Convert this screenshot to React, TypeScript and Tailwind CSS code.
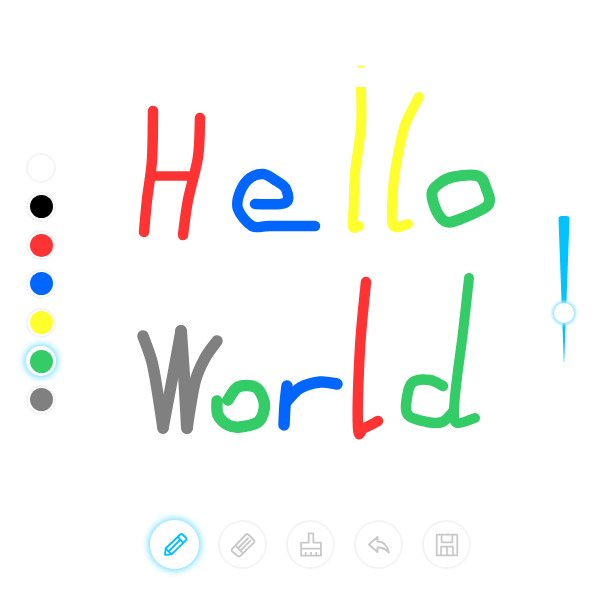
import React from 'react';

type Pt = [number, number];
type Stroke = { color: string; w: number; pts: Pt[]; closed?: boolean; butt?: boolean };

const RED = '#ff3333';
const BLUE = '#0066ff';
const YELLOW = '#ffff2e';
const GREEN = '#33cc66';
const GRAY = '#808080';

const strokes: Stroke[] = [
  // Hello
  { color: RED, w: 10.5, pts: [[153, 111], [152, 160], [147, 200], [144, 232]] },
  { color: RED, w: 10.5, pts: [[200, 118], [198, 157], [188, 200], [183, 235]] },
  { color: RED, w: 9.5, pts: [[152, 176], [188, 176]] },
  { color: BLUE, w: 10.5, pts: [[255, 204], [285, 203], [286, 189], [275, 180], [263, 174], [250, 178], [240, 192], [238, 209], [252, 226], [270, 226], [315, 226]] },
  { color: YELLOW, w: 10, butt: true, pts: [[361, 87], [361, 127], [355, 173], [353.5, 215]] },
  { color: YELLOW, w: 10, pts: [[353.5, 212], [353, 227], [359, 226]] },
  { color: YELLOW, w: 10, pts: [[419, 97], [405, 125], [397, 160], [393, 190], [393, 225], [408, 224]] },
  { color: GREEN, w: 11, closed: true, pts: [[432, 193], [440, 183], [453, 177], [478, 176], [486, 188], [488, 205], [463, 218], [447, 222], [437, 212]] },
  // World
  { color: GRAY, w: 11.5, pts: [[143, 336], [152, 362], [158, 395], [163, 428]] },
  { color: GRAY, w: 11.5, pts: [[163, 428], [173, 375], [181, 331]] },
  { color: GRAY, w: 12, pts: [[181, 331], [184, 375], [187, 428]] },
  { color: GRAY, w: 11.5, pts: [[187, 428], [195, 382], [205, 358], [217, 341]] },
  { color: GREEN, w: 11.5, pts: [[217, 401], [218, 415], [228, 425], [240, 427], [258, 422], [264, 410], [263, 398], [255, 387], [238, 387], [228, 400]] },
  { color: BLUE, w: 11.5, pts: [[287, 386], [285, 405], [284, 425]] },
  { color: BLUE, w: 11.5, pts: [[286, 402], [300, 388], [320, 382], [337, 384]] },
  { color: RED, w: 10.5, pts: [[366, 282], [360, 348], [358, 428], [364, 428], [378, 421]] },
  { color: GREEN, w: 10, pts: [[469, 278], [463, 332], [457, 378], [454, 410], [457, 423], [475, 418]] },
  { color: GREEN, w: 10.5, pts: [[443, 386], [430, 380], [413, 382], [407, 397], [408, 415], [427, 422], [442, 422], [453, 412]] },
];

// catmull-rom through the points, the drawing has no hard corners
function toPath(pts: Pt[], closed?: boolean) {
  const n = pts.length;
  const at = (i: number) => (closed ? pts[(i + n) % n] : pts[Math.max(0, Math.min(n - 1, i))]);
  let d = `M${pts[0][0]} ${pts[0][1]}`;
  const segs = closed ? n : n - 1;
  for (let i = 0; i < segs; i++) {
    const [p0, p1, p2, p3] = [at(i - 1), at(i), at(i + 1), at(i + 2)];
    const c1 = [p1[0] + (p2[0] - p0[0]) / 6, p1[1] + (p2[1] - p0[1]) / 6];
    const c2 = [p2[0] - (p3[0] - p1[0]) / 6, p2[1] - (p3[1] - p1[1]) / 6];
    d += ` C${c1[0]} ${c1[1]} ${c2[0]} ${c2[1]} ${p2[0]} ${p2[1]}`;
  }
  return closed ? d + ' Z' : d;
}

const swatches = ['#ffffff', '#000000', RED, BLUE, YELLOW, GREEN, GRAY];

const PencilIcon = () => (
  <svg viewBox="0 0 24 24" className="h-7 w-7 blur-[0.3px]" fill="none" stroke="currentColor" strokeWidth="1.6" strokeLinejoin="round">
    <path d="M3.5 20.5 L4 15 L16.5 3 Q17.5 2.2 18.5 3 L21.5 6 Q22.2 7 21.3 8 L9 20 Z" />
    <path d="M4 15 L9 20 M6.5 17.5 L16.5 7.5 M14.3 5 L19 10" />
  </svg>
);

const EraserIcon = () => (
  <svg viewBox="0 0 24 24" className="h-7 w-7 blur-[0.3px]" fill="none" stroke="currentColor" strokeWidth="1.6" strokeLinejoin="round">
    <path d="M2.5 15.5 L14.5 3 Q15.5 2.2 16.5 3 L21.5 8 Q22.2 9 21.3 10 L9.5 21.5 Q8.5 22.3 7.5 21.5 L2.8 17.5 Q2 16.5 2.5 15.5 Z" />
    <path d="M5.5 12.5 L11.5 18.5 M7.8 14.8 L16.8 5.8 M9.8 16.8 L18.8 7.8" />
  </svg>
);

const BrushIcon = () => (
  <svg viewBox="0 0 24 24" className="h-7 w-7 blur-[0.3px]" fill="none" stroke="currentColor" strokeWidth="1.5" strokeLinejoin="round">
    <path d="M10 10 V2 H14 V10 H20.5 V21 H3.5 V10 Z" />
    <path d="M3.5 15 H20.5 M7.5 21 V18 M12 21 V18 M16.5 21 V18" />
  </svg>
);

const UndoIcon = () => (
  <svg viewBox="0 0 24 24" className="h-6 w-6 blur-[0.3px]" fill="none" stroke="currentColor" strokeWidth="1.9" strokeLinejoin="round">
    <path d="M2 11.5 L10.5 4 V8.5 Q19 8 22 19.5 Q17 14 10.5 14.5 V19 Z" />
  </svg>
);

const SaveIcon = () => (
  <svg viewBox="0 0 24 24" className="h-[26px] w-[26px] blur-[0.3px]" fill="none" stroke="currentColor" strokeWidth="1.6" strokeLinejoin="round">
    <path d="M2.5 2.5 H21.5 V21.5 H2.5 Z" />
    <path d="M7 2.5 V9.5 H17 V2.5 M6.5 21.5 V13.5 H17.5 V21.5 M12 13.5 V21.5" />
  </svg>
);

const tools = [
  { id: 'pencil', icon: PencilIcon, active: true },
  { id: 'eraser', icon: EraserIcon, active: false },
  { id: 'brush', icon: BrushIcon, active: false },
  { id: 'undo', icon: UndoIcon, active: false },
  { id: 'save', icon: SaveIcon, active: false },
];

export default function App() {
  return (
    <div className="relative flex h-[600px] w-[600px] flex-col overflow-hidden bg-white">
      {/* the drawing itself, sits behind the controls */}
      <svg viewBox="0 0 600 600" className="absolute inset-0 h-[600px] w-[600px] blur-[0.4px]" fill="none">
        <ellipse cx="361" cy="66.5" rx="4" ry="1" fill={YELLOW} />
        {strokes.map((s, i) => (
          <path
            key={i}
            d={toPath(s.pts, s.closed)}
            stroke={s.color}
            strokeWidth={s.w}
            strokeLinecap={s.butt ? 'butt' : 'round'}
            strokeLinejoin="round"
          />
        ))}
      </svg>

      <div className="relative flex h-[519px] items-start justify-between pl-[26px] pr-[24px] pt-[153px]">
        <div className="flex flex-col gap-[8.67px]">
          {swatches.map((c, i) => (
            <button
              key={c}
              className={`flex h-[30px] w-[30px] items-center justify-center rounded-full border-2 bg-white ${
                i === 5 ? 'border-white shadow-[0_0_6px_2px_#7fe0ff]' : 'border-[#f4f4f4]'
              }`}
            >
              <span className="block h-[23px] w-[23px] rounded-full" style={{ backgroundColor: c }} />
            </button>
          ))}
        </div>

        <div className="relative mt-[63px] h-[146px] w-[24px]">
          <svg viewBox="0 0 24 146" className="h-[146px] w-[24px]">
            <path d="M6.5 3 Q6.5 0 9.5 0 H14.5 Q17.5 0 17.5 3 L12.2 146 H11.8 Z" fill="#00c3ff" />
          </svg>
          <div className="absolute left-[2px] top-[87px] h-[20px] w-[20px] rounded-full bg-white shadow-[0_0_3px_2px_#9be6ff]" />
        </div>
      </div>

      <div className="relative flex justify-center gap-[19px] pl-[21px] pt-[1px]">
        {tools.map((t) => (
          <button
            key={t.id}
            className={`flex h-[49px] w-[49px] items-center justify-center rounded-full border-2 bg-white ${
              t.active
                ? 'border-white text-[#00bfff] shadow-[0_0_6px_2px_#7fe0ff]'
                : 'border-[#f4f4f4] text-[#c8c8c8]'
            }`}
          >
            <t.icon />
          </button>
        ))}
      </div>
    </div>
  );
}
